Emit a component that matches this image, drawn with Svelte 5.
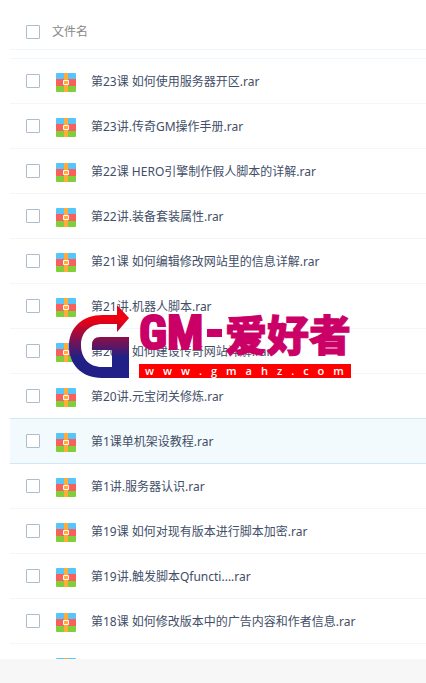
<script>
  const files = [
    '第23课 如何使用服务器开区.rar',
    '第23讲.传奇GM操作手册.rar',
    '第22课 HERO引擎制作假人脚本的详解.rar',
    '第22讲.装备套装属性.rar',
    '第21课 如何编辑修改网站里的信息详解.rar',
    '第21讲.机器人脚本.rar',
    '第20课 如何建设传奇网站详解.rar',
    '第20讲.元宝闭关修炼.rar',
    '第1课单机架设教程.rar',
    '第1讲.服务器认识.rar',
    '第19课 如何对现有版本进行脚本加密.rar',
    '第19讲.触发脚本Qfuncti....rar',
    '第18课 如何修改版本中的广告内容和作者信息.rar'
  ];

  const active = 8;
</script>

{#snippet rar()}
  <svg class="rar" viewBox="0 0 20 19" aria-hidden="true">
    <path fill="#56c5f8" d="M0 6V1a1 1 0 0 1 1-1h18a1 1 0 0 1 1 1v5z" />
    <path fill="#fb5f5c" d="M0 6h20v7H0z" />
    <path fill="#80cf3a" d="M0 13h20v5a1 1 0 0 1-1 1H1a1 1 0 0 1-1-1z" />
    <path fill="#ffac38" d="M8 0h4v19H8z" />
    <path fill="#ffac38" stroke="#fff" d="M7.500 7.500h5v4h-5z" />
  </svg>
{/snippet}

<main>
  <label class="head">
    <input type="checkbox" />
    <span>文件名</span>
  </label>

  <ul>
    {#each files as file, i}
      <li class:active={i === active}>
        <input type="checkbox" id={`file-${i}`} />
        {@render rar()}
        <label for={`file-${i}`}>{file}</label>
      </li>
    {/each}
    <li>
      <input type="checkbox" aria-label="rar" />
      {@render rar()}
    </li>
  </ul>

  <div class="watermark">
    <svg viewBox="0 0 62 76" aria-hidden="true">
      <defs>
        <linearGradient id="mark" x1="0" y1="0" x2="0" y2="1">
          <stop offset=".2" stop-color="#ec0012" />
          <stop offset=".72" stop-color="#202086" />
        </linearGradient>
      </defs>
      <path fill="url(#mark)" d="M48 1l12 13-12 14v-8H34C20 20 12 29 12 41c0 13 8 22 21 22h10V46H23V41q0-8 8-8h29v41H33C12 74 0 60 0 42S13 11 34 11h14z" />
    </svg>
    <div class="words">
      <div class="brand"><b>GM</b><i></i><strong>爱好者</strong></div>
      <div class="site">www.gmahz.com</div>
    </div>
  </div>
</main>

<style>
  :global(body) { margin: 0; background: #f7f7f7; }
  main { position: relative; display: flex; flex-direction: column; box-sizing: border-box; height: 100vh; padding-bottom: 24px; font: 12px/18px "Noto Sans", "Noto Sans CJK SC", sans-serif; color: #424e67; }
  .head { display: flex; align-items: center; gap: 12px; box-sizing: border-box; height: 58px; padding: 14px 16px 8px 26px; background: linear-gradient(#f2f6fd, #f2f6fd) 10px 49px / 100% 1px no-repeat #fff; color: #888; }
  input { appearance: none; flex: none; box-sizing: border-box; width: 14px; height: 14px; margin: 0; border: 1px solid #aebdcc; border-radius: 1px; background: #fff; }
  input:checked { background: #09aaff; }
  ul { flex: 1; min-height: 0; margin: 0; padding: 0 0 0 10px; overflow: hidden; background: #fff; list-style: none; }
  li { display: flex; align-items: center; box-sizing: border-box; height: 45px; padding: 0 16px; border-top: 1px solid #f2f6fd; }
  li.active { background: #f3fafe; border-color: #cfe8f7; }
  li.active + li { border-color: #cfe8f7; }
  .rar { flex: none; width: 20px; height: 19px; margin: 2px 15px 0 16px; }
  li label { padding-top: 2px; white-space: nowrap; }
  .watermark { position: absolute; top: 304px; left: 69px; display: flex; gap: 8px; pointer-events: none; }
  .watermark svg { width: 62px; height: 76px; }
  .words { width: 212px; padding-top: 6px; }
  .brand { display: flex; align-items: center; height: 46px; margin-bottom: 8px; color: #cb0067; white-space: nowrap; }
  .brand b { font: 700 48px/46px "Liberation Sans Narrow", "Roboto Condensed", "Open Sans Condensed", "Noto Sans CJK SC", sans-serif; -webkit-text-stroke: 2px #cb0067; }
  .brand i { flex: 1; height: 8px; margin: 0 3px; background: #cb0067; }
  .brand strong { font: 900 42px/46px "Noto Sans CJK SC", sans-serif; -webkit-text-stroke: 1px #cb0067; }
  .site { box-sizing: border-box; height: 14px; padding-left: 6px; background: #fe0000; color: #fff; font: 600 11px/13px "Open Sans", sans-serif; letter-spacing: 9px; white-space: nowrap; }
</style>
